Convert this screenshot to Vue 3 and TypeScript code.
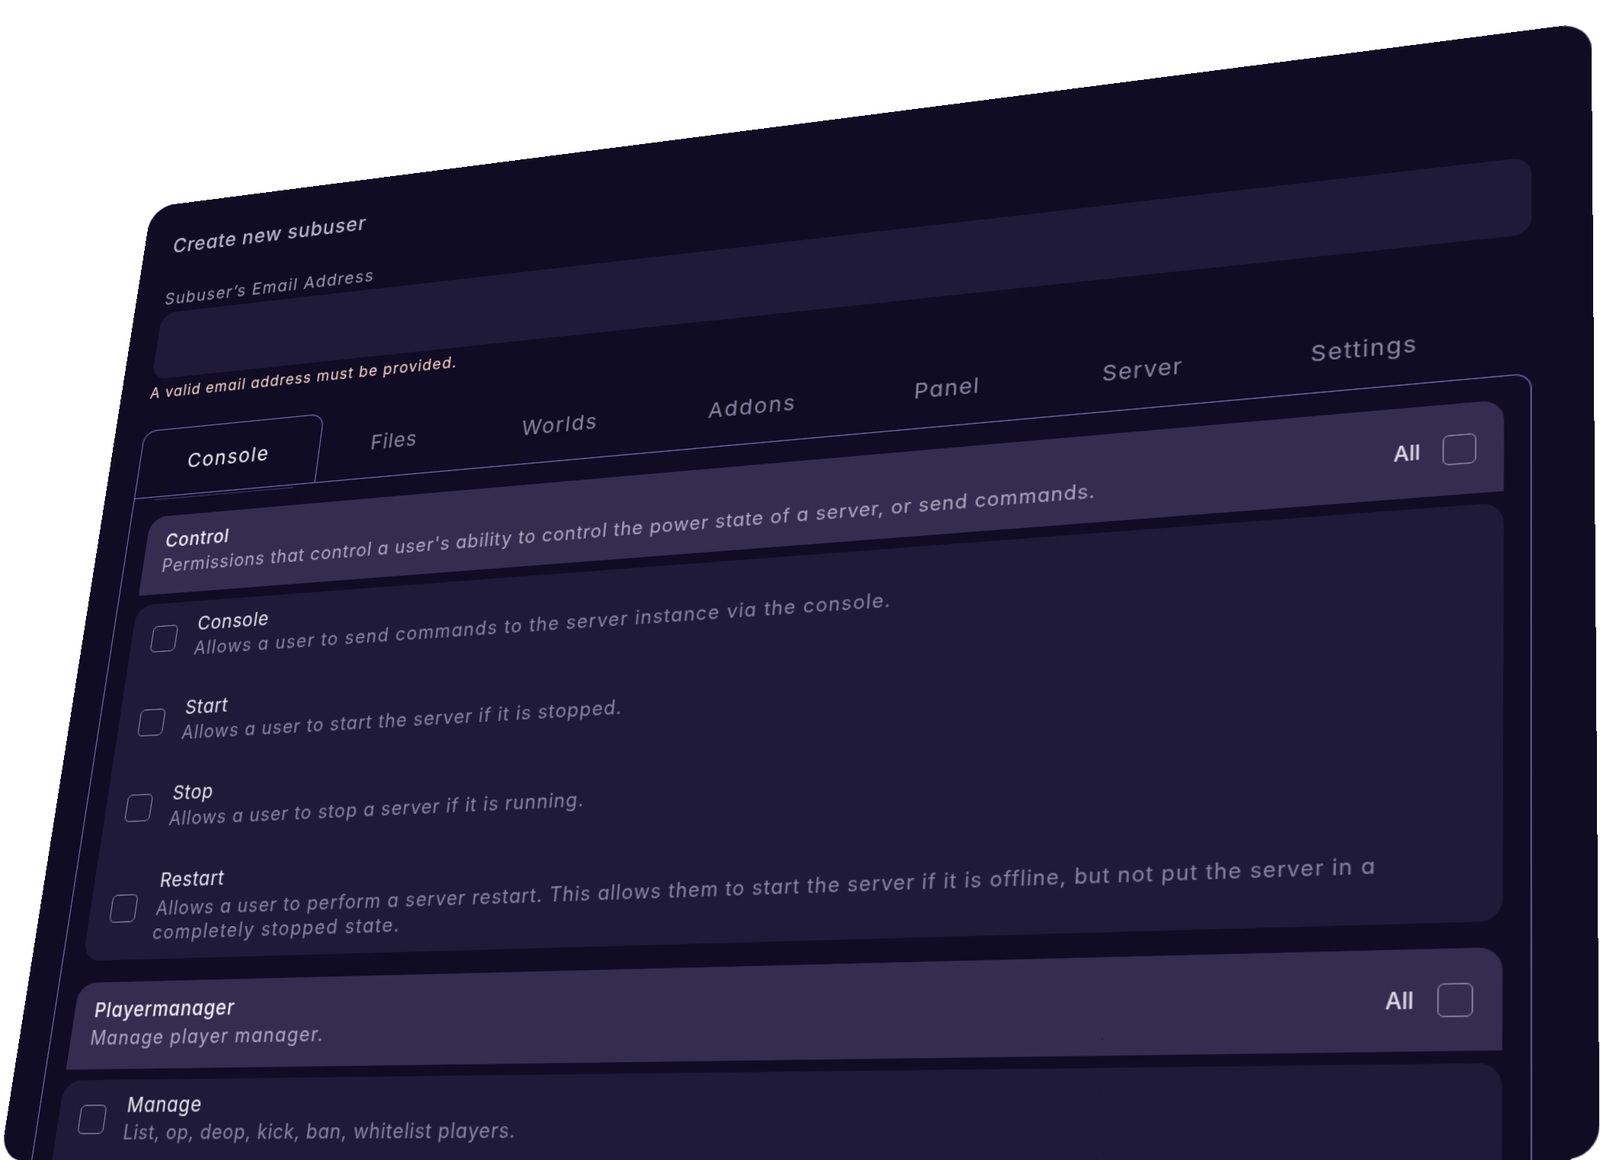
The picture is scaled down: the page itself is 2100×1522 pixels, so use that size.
<script setup lang="ts">
const W = 1400
const H = 980
type P = [number, number]
const corners: P[] = [[198.6, 271.8], [2089, 29], [2100.3, 1522], [0, 1524]]

function cardMatrix(q: P[]): string {
  const [[x0, y0], [x1, y1], [x2, y2], [x3, y3]] = q
  const dx1 = x1 - x2, dx2 = x3 - x2, sx = x0 - x1 + x2 - x3
  const dy1 = y1 - y2, dy2 = y3 - y2, sy = y0 - y1 + y2 - y3
  const den = dx1 * dy2 - dx2 * dy1
  const g = (sx * dy2 - dx2 * sy) / den
  const h = (dx1 * sy - sx * dy1) / den
  const a = x1 - x0 + g * x1, b = x3 - x0 + h * x3
  const d = y1 - y0 + g * y1, e = y3 - y0 + h * y3
  return `matrix3d(${a / W},${d / W},0,${g / W},${b / H},${e / H},0,${h / H},0,0,1,0,${x0},${y0},0,1)`
}
const cardStyle = { transform: cardMatrix(corners) }

const tabs = [
  { name: 'Console', width: 198, track: 1.5 },
  { name: 'Files', width: 157, track: 0.8 },
  { name: 'Worlds', width: 184, track: 1.5 },
  { name: 'Addons', width: 194, track: 1.7 },
  { name: 'Panel', width: 171, track: 1.2 },
  { name: 'Server', width: 178, track: 1.1 },
  { name: 'Settings', width: 199, track: 1.3 },
]

// track: letter-spacing per line, because the fallback face has other widths than the original
const sections = [
  {
    title: 'Control',
    desc: "Permissions that control a user's ability to control the power state of a server, or send commands.",
    track: 0.79,
    rows: [
      { title: 'Console', lines: [{ t: 'Allows a user to send commands to the server instance via the console.', track: 1.09 }] },
      { title: 'Start', lines: [{ t: 'Allows a user to start the server if it is stopped.', track: 0.87 }] },
      { title: 'Stop', lines: [{ t: 'Allows a user to stop a server if it is running.', track: 0.83 }] },
      {
        title: 'Restart',
        lines: [
          { t: 'Allows a user to perform a server restart. This allows them to start the server if it is offline, but not put the server in a', track: 0.89 },
          { t: 'completely stopped state.', track: 1.28 },
        ],
      },
    ],
  },
  {
    title: 'Playermanager',
    desc: 'Manage player manager.',
    track: 1.11,
    rows: [{ title: 'Manage', lines: [{ t: 'List, op, deop, kick, ban, whitelist players.', track: 0.65 }] }],
  },
]
</script>

<template>
  <div class="stage">
    <div class="card" :style="cardStyle">
      <div class="heading">Create new subuser</div>
      <div class="label">Subuser’s Email Address</div>
      <div class="input"></div>
      <div class="error">A valid email address must be provided.</div>

      <div class="tabs">
        <div
          v-for="(t, i) in tabs"
          :key="t.name"
          class="tab"
          :class="{ active: i === 0 }"
          :style="{ width: t.width + 'px', letterSpacing: t.track + 'px' }"
        >{{ t.name }}</div>
      </div>

      <div class="panel">
        <section v-for="s in sections" :key="s.title" class="section">
          <div class="sec-head">
            <div>
              <div class="sec-title">{{ s.title }}</div>
              <div class="sec-desc" :style="{ letterSpacing: s.track + 'px' }">{{ s.desc }}</div>
            </div>
            <div class="all">
              <span>All</span>
              <span class="box box-all"></span>
            </div>
          </div>
          <div class="group">
            <div v-for="r in s.rows" :key="r.title" class="row" :class="{ multi: r.lines.length > 1 }">
              <span class="box"></span>
              <div class="row-text">
                <div class="row-title">{{ r.title }}</div>
                <div
                  v-for="l in r.lines"
                  :key="l.t"
                  class="row-desc"
                  :style="{ letterSpacing: l.track + 'px' }"
                >{{ l.t }}</div>
              </div>
            </div>
          </div>
        </section>
      </div>
    </div>
  </div>
</template>

<style>
html, body { margin: 0; background: #fff; }
</style>

<style scoped>
.stage {
  position: relative;
  width: 2100px;
  height: 1522px;
  overflow: hidden;
  background: #fff;
}
/* dark backing inside the card's outline, so raster tile seams of the warped layer never show white */
.stage::before {
  content: "";
  position: absolute;
  inset: 0;
  background: #0f0c23;
  clip-path: polygon(215px 290px, 2070px 50px, 2085px 1500px, 2060px 1522px, 40px 1522px, 20px 1500px);
}
.card {
  width: 1400px;
  height: 980px;
  box-sizing: border-box;
  padding: 34px 49px 0 33px;
  background: #0f0c23;
  border-radius: 26px;
  overflow: hidden;
  transform-origin: 0 0;
  font-family: Inter, "Noto Sans", sans-serif;
  font-feature-settings: "cv11";
}
.heading {
  font-size: 21px;
  line-height: 30px;
  letter-spacing: 0.75px;
  color: #b9b5ca;
  font-weight: 500;
}
.label {
  margin-top: 32px;
  font-size: 17.5px;
  line-height: 24px;
  letter-spacing: 1.2px;
  color: #a09bb4;
}
.input {
  height: 73px;
  margin-top: 3px;
  margin-left: -1px;
  border-radius: 16px;
  background: #1f1a38;
}
.error {
  margin-top: 5px;
  font-size: 15.5px;
  line-height: 22px;
  letter-spacing: 1px;
  color: #fcd7cd;
}
.tabs {
  display: flex;
  margin-top: 29px;
}
.tab {
  height: 72px;
  box-sizing: border-box;
  padding-bottom: 1px;
  display: flex;
  align-items: center;
  justify-content: center;
  font-size: 20.5px;
  color: #8b86a4;
}
.tab.active {
  position: relative;
  color: #f1eff7;
  border: 1.4px solid #7668b0;
  border-bottom: 0;
  border-radius: 14px 14px 0 0;
}
.tab.active::after {
  content: "";
  position: absolute;
  left: 22px;
  right: 22px;
  bottom: -4px;
  height: 1px;
  background: #3a3360;
}
.panel {
  padding: 21px 21.5px 0 21px;
  border: 1.4px solid #7668b0;
  border-bottom: 0;
  border-top-right-radius: 14px;
}
.section + .section { margin-top: 21px; }
.sec-head {
  height: 82px;
  box-sizing: border-box;
  padding: 12.5px 22px 0 21px;
  display: flex;
  justify-content: space-between;
  background: #352d4f;
  border-radius: 18px 18px 0 0;
}
.sec-title {
  font-size: 18.5px;
  line-height: 27px;
  letter-spacing: 0.7px;
  color: #f0eef6;
  font-weight: 500;
}
.sec-desc {
  font-size: 18px;
  line-height: 26px;
  color: #aea9c1;
}
.all {
  display: flex;
  align-items: center;
  gap: 18px;
  height: 58px;
  font-size: 18px;
  font-weight: 500;
  color: #e2dfec;
}
.group {
  margin-top: 10px;
  min-height: 100px;
  background: #1f1a38;
  border-radius: 18px;
}
.row {
  display: flex;
  align-items: center;
  gap: 21px;
  min-height: 72px;
  padding: 0 22px;
}
.row.multi { min-height: 99px; }
.row + .row { margin-top: 13px; }
.box {
  flex: none;
  width: 27px;
  height: 27px;
  box-sizing: border-box;
  border: 1.4px solid #857f9e;
  border-radius: 5px;
}
.box-all {
  width: 26.5px;
  height: 26.5px;
  border-color: #8f89a8;
}
.row-text { padding-bottom: 3px; }
.multi .row-text { padding-bottom: 4.5px; }
.row-title {
  font-size: 18.5px;
  line-height: 28px;
  letter-spacing: 0.7px;
  color: #e9e7f1;
}
.multi .row-title { margin-bottom: 1.5px; }
.row-desc {
  font-size: 18px;
  line-height: 24px;
  color: #8a85a3;
  white-space: nowrap;
}
.multi .row-desc { line-height: 23.5px; }
</style>
